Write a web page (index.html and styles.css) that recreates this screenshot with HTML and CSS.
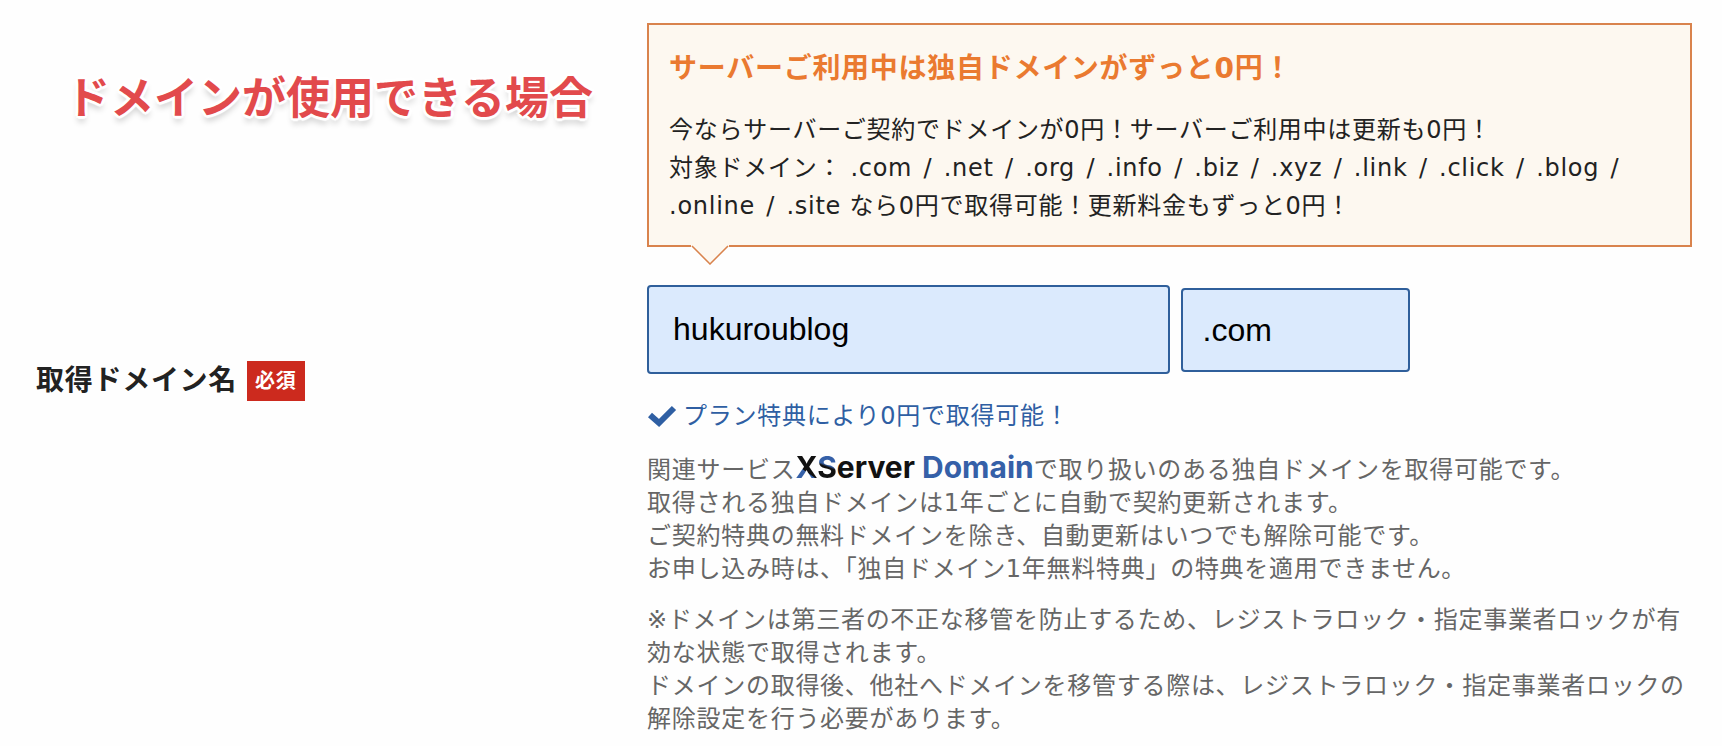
FILE: index.html
```html
<!DOCTYPE html>
<html lang="ja">
<head>
<meta charset="utf-8">
<title>取得ドメイン名</title>
<link rel="stylesheet" href="styles.css">
</head>
<body>
<main class="row">
  <div class="side">
    <h1 class="caption">ドメインが使用できる場合</h1>
    <div class="field-name">
      <label class="field-label" for="domain">取得ドメイン名</label>
      <span class="badge">必須</span>
    </div>
  </div>
  <div class="content">
    <section class="callout">
      <h2 class="callout-title">サーバーご利用中は独自ドメインがずっと0円！</h2>
      <p class="callout-text">今ならサーバーご契約でドメインが0円！サーバーご利用中は更新も0円！<br>対象ドメイン： .com <span class="slash">/</span> .net <span class="slash">/</span> .org <span class="slash">/</span> .info <span class="slash">/</span> .biz <span class="slash">/</span> .xyz <span class="slash">/</span> .link <span class="slash">/</span> .click <span class="slash">/</span> .blog <span class="slash">/</span> .online <span class="slash">/</span> .site なら0円で取得可能！更新料金もずっと0円！</p>
      <svg class="callout-tail" viewBox="0 0 38 20" width="38" height="20" aria-hidden="true"><path class="tail-fill" d="M0 0H38V2H37L19 19L1 2H0Z"/><path class="tail-line" d="M1 1L19 19L37 1"/></svg>
    </section>
    <div class="inputs">
      <input class="domain" id="domain" type="text" value="hukuroublog">
      <select class="tld" aria-label="ドメインの種類"><option>.com</option></select>
    </div>
    <p class="status">
      <svg class="check" viewBox="0 0 30 24" width="30" height="24" aria-hidden="true"><path d="M3 11L12 19L27 4"/></svg>
      <span>プラン特典により0円で取得可能！</span>
    </p>
    <p class="note">関連サービス<span class="logo"><span class="logo-x">X</span><span class="logo-s">S</span>erver <span class="logo-domain">Domain</span></span>で取り扱いのある独自ドメインを取得可能です。<br>取得される独自ドメインは1年ごとに自動で契約更新されます。<br>ご契約特典の無料ドメインを除き、自動更新はいつでも解除可能です。<br>お申し込み時は、「独自ドメイン1年無料特典」の特典を適用できません。</p>
    <p class="note">※ドメインは第三者の不正な移管を防止するため、レジストラロック・指定事業者ロックが有効な状態で取得されます。<br>ドメインの取得後、他社へドメインを移管する際は、レジストラロック・指定事業者ロックの解除設定を行う必要があります。</p>
  </div>
</main>
</body>
</html>
```
FILE: styles.css
```css
* { box-sizing: border-box; }
body {
  margin: 0;
  background: #fefefe;
  color: #222;
  font-family: "DejaVu Sans", "Noto Sans CJK JP", sans-serif;
  font-size: 24px;
  letter-spacing: 0.03em;
}
h1, h2, p { margin: 0; }
.row {
  display: grid;
  grid-template-columns: 36.9% 1fr;
  padding: 23px 30px 0 36px;
}
.side {
  display: flex;
  flex-direction: column;
  gap: 234px;
  padding-top: 40px;
}
.caption {
  padding-left: 30px;
  color: #e24a4c;
  font-family: "Noto Sans CJK JP", sans-serif;
  font-size: 44px;
  line-height: 64px;
  letter-spacing: normal;
  white-space: nowrap;
  text-shadow:
    3px 0 1px #fff, -3px 0 1px #fff, 0 3px 1px #fff, 0 -3px 1px #fff,
    2px 2px 1px #fff, -2px 2px 1px #fff, 2px -2px 1px #fff, -2px -2px 1px #fff,
    0 6px 6px rgba(0, 0, 0, 0.2);
}
.field-name {
  display: flex;
  align-items: center;
  gap: 10px;
}
.field-label {
  font-size: 28px;
  font-weight: 700;
  line-height: 40px;
}
.badge {
  padding: 0 8px;
  background: #cc2a1e;
  color: #fff;
  font-size: 20px;
  font-weight: 700;
  line-height: 40px;
}
.callout {
  position: relative;
  padding: 24px 20px 20px;
  border: 2px solid #d9834d;
  background: #fdf8f0;
}
.callout-title {
  margin-bottom: 22px;
  color: #ea7a30;
  font-size: 28px;
  line-height: 40px;
}
.callout-text { line-height: 38px; }
.slash { margin: 0 3px; }
.callout-tail {
  position: absolute;
  top: 100%;
  left: 42px;
}
.tail-fill { fill: #fdf8f0; }
.tail-line { fill: none; stroke: #d9834d; stroke-width: 1.5; }
.inputs {
  display: flex;
  align-items: center;
  gap: 11px;
  margin-top: 38px;
}
.domain, .tld {
  border: 2px solid #2f5f9b;
  border-radius: 4px;
  background: #dbeafd;
  color: #000;
  font-family: "Liberation Sans", Arial, sans-serif;
  font-size: 32px;
}
.domain { width: 50%; height: 89px; padding: 0 24px; }
.tld { width: 22%; height: 84px; padding: 0 20px; appearance: none; }
.status {
  display: flex;
  align-items: center;
  gap: 6px;
  margin-top: 24px;
  color: #2f5fa3;
  line-height: 36px;
}
.check { fill: none; stroke: #2f5fa3; stroke-width: 6; }
.note {
  margin-top: 18px;
  color: #666;
  line-height: 33px;
}
.logo {
  color: #111;
  font-family: Inter, sans-serif;
  font-size: 30px;
  font-weight: 700;
  line-height: 1;
  letter-spacing: normal;
}
.logo-x, .logo-s {
  background: linear-gradient(35deg, #3560a8 40%, #111 42%);
  background-clip: text;
  color: transparent;
}
.logo-s { background-image: linear-gradient(200deg, #3560a8 45%, #111 50%); }
.logo-domain { color: #3560a8; }
```
